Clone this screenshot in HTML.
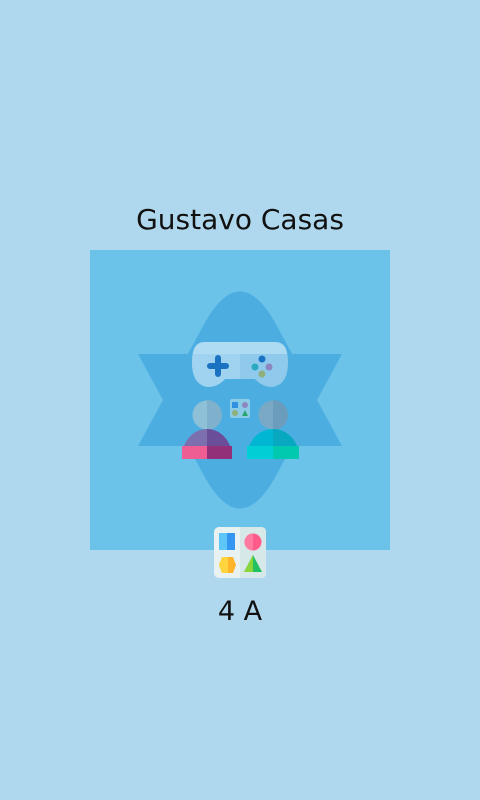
<!DOCTYPE html>
<html><head><style>
html,body{margin:0;padding:0;width:480px;height:800px;background:#afd8ee;overflow:hidden;font-family:"DejaVu Sans",sans-serif;color:#111}
.t{position:absolute;left:0;width:480px;text-align:center}
</style></head><body>
<div class="t" style="top:203px;font-size:28px;">Gustavo Casas</div>
<svg width="480" height="800" style="position:absolute;left:0;top:0">
<rect x="90" y="250" width="300" height="300" fill="#6cc3e9"/>
<g fill="#4cade0">
<path d="M138 446 L203.6 325 Q240 258 276.4 325 L342 446Z"/>
<path d="M138 354 L203.6 475 Q240 542 276.4 475 L342 354Z"/>
</g>
<!-- controller -->
<path d="M205 342 H275 Q288 342 288 362 Q288 385 272 387 Q262 387 255 379 H225 Q218 387 208 387 Q192 385 192 362 Q192 342 205 342Z" fill="#8fcaec"/>
<path d="M205 342 H240 V379 H225 Q218 387 208 387 Q192 385 192 362 Q192 342 205 342Z" fill="#9fd3f0"/>
<path d="M205 342 H275 Q286 342 287 354 H193 Q194 342 205 342Z" fill="#b4def4" opacity=".8"/>
<rect x="207" y="363" width="22" height="6" rx="3" fill="#1a73c2"/>
<rect x="215" y="355" width="6" height="22" rx="3" fill="#1a73c2"/>
<circle cx="262" cy="359" r="3.5" fill="#1a73c2"/><circle cx="255" cy="367" r="3.5" fill="#2aaabf"/>
<circle cx="269" cy="367" r="3.5" fill="#8d86c0"/><circle cx="262" cy="374" r="3.5" fill="#8fb07a"/>
<!-- people -->
<circle cx="207" cy="415" r="14.5" fill="#8ec0d8"/><path d="M207 400 A15 15 0 0 1 207 430Z" fill="#7fb1cd"/>
<circle cx="273" cy="415" r="14.5" fill="#7aa9c6"/><path d="M273 400 A15 15 0 0 1 273 430Z" fill="#6c9cbb"/>
<path d="M182 457 A25 28 0 0 1 232 457 V459 H182Z" fill="#7c6fb0"/>
<path d="M207 429 A25 28 0 0 1 232 457 V459 H207Z" fill="#6a4e9a"/>
<rect x="182" y="446" width="25" height="13" fill="#ef5e93"/><rect x="207" y="446" width="25" height="13" fill="#92307a"/>
<path d="M247 457 A26 28 0 0 1 299 457 V459 H247Z" fill="#00b6d2"/>
<path d="M273 429 A26 28 0 0 1 299 457 V459 H273Z" fill="#08a8c0"/>
<rect x="247" y="446" width="26" height="13" fill="#00cfd6"/><rect x="273" y="446" width="26" height="13" fill="#00c9b0"/>
<!-- small icon -->
<rect x="230" y="399" width="20" height="19" rx="2" fill="#8ccbe8"/>
<rect x="232" y="402" width="6" height="6" fill="#2f8fe0"/><circle cx="245" cy="405" r="3" fill="#8d86c0"/>
<circle cx="235" cy="413" r="3" fill="#8fb07a"/><path d="M245 410 L248 416 H242Z" fill="#2aa570"/>
<!-- bottom icon -->
<rect x="214" y="527" width="52" height="51" rx="5" fill="#e9f2f2"/>
<path d="M240 527 H261 Q266 527 266 532 V573 Q266 578 261 578 H240Z" fill="#d7e8e8"/>
<rect x="219" y="533" width="8" height="17" fill="#5cc6f8"/><rect x="227" y="533" width="8" height="17" fill="#3496f0"/>
<circle cx="253" cy="542" r="8.5" fill="#ff5b8a"/><path d="M253 533.5 A8.5 8.5 0 0 0 253 550.5Z" fill="#ff7aa0"/>
<path d="M222 557 H233 L236 565 L233 573 H222 L219 565Z" fill="#ffb42a"/><path d="M222 557 H228 V573 H222 L219 565Z" fill="#ffd43d"/>
<path d="M253 555 L262 572 H244Z" fill="#22c060"/><path d="M253 555 V572 H244Z" fill="#8ad63a"/>
</svg>
<div class="t" style="top:596px;font-size:27px;">4 A</div>
</body></html>
